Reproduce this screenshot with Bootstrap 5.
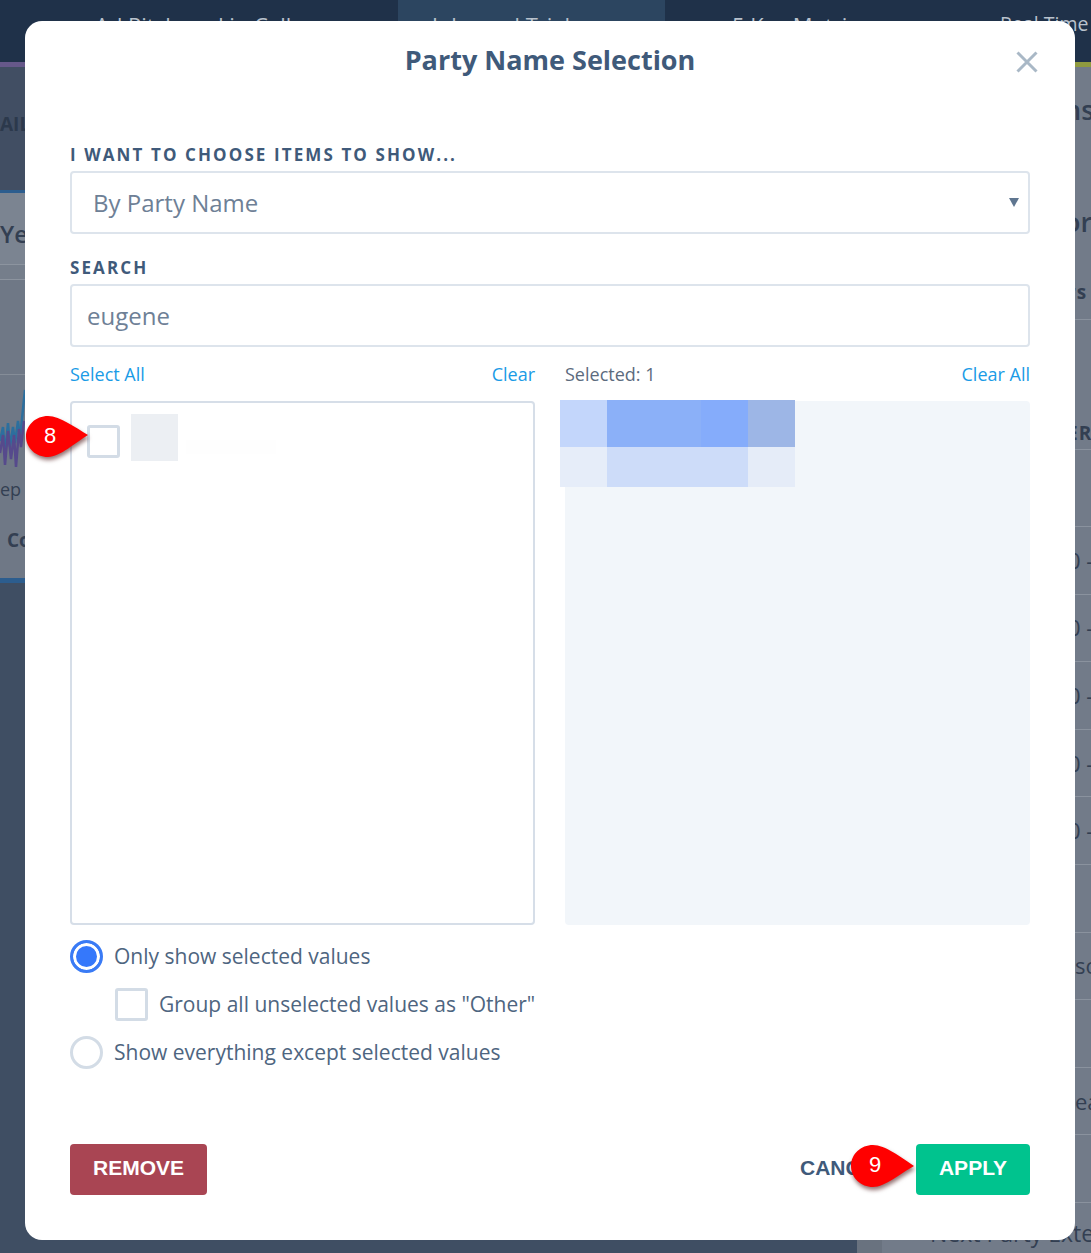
<!DOCTYPE html>
<html lang="en">
<head>
  <meta charset="UTF-8">
  <title>Party Name Selection</title>
  <meta name="viewport" content="width=device-width, initial-scale=1.0">
  <link href="https://cdn.jsdelivr.net/npm/bootstrap@5.3.3/dist/css/bootstrap.min.css" rel="stylesheet">
  <style>
    body { font-family: "Open Sans", sans-serif; background: #3f4e63; overflow: hidden; }
    .page-back { height: 1253px; overflow: hidden; }

    /* page behind the dialog, already dimmed */
    .top-tabs { height: 62px; background: #1f3149; color: #b9c2cd; font-size: 22px; }
    .top-tabs > div { padding-top: 9px; white-space: nowrap; overflow: hidden; }
    .tab-a { width: 398px; padding-left: 95px; }
    .tab-b { width: 267px; padding-left: 34px; background: #2c4560; }
    .tab-c { width: 335px; padding-left: 67px; }
    .tab-d { flex: 1; font-size: 19.5px; }
    .stripe-a { height: 5px; width: 398px; background: #66588a; }
    .stripe-b { height: 5px; flex: 1; background: #8f9a3f; }
    .left-col { width: 857px; }
    .right-col { flex: 1; background: #727b89; color: #333f52; font-size: 22px; white-space: nowrap; overflow: hidden; }
    .left-head { height: 123px; background: #414e63; color: #2c394c; font-size: 19px; font-weight: 700; padding-top: 43px; }
    .left-card { height: 393px; border-top: 3px solid #2c5d8e; border-bottom: 5px solid #2c5d8e; background: #6f7886; color: #333f52; }
    .card-title-back { height: 72px; background: #7b8491; font-size: 24px; font-weight: 600; padding-top: 23px; border-bottom: 1px solid #8c949f; }
    .card-gap { height: 15px; background: #757e8b; border-bottom: 1px solid #8c949f; }
    .card-empty { height: 95px; border-bottom: 1px solid #858d98; }
    .card-plot { height: 95px; }
    .plot-line { display: block; }
    .plot-foot { font-size: 18px; padding-top: 6px; height: 46px; }
    .plot-name { font-size: 19px; font-weight: 700; padding: 10px 0 0 7px; }
    .side-row { display: flex; align-items: center; border-bottom: 1px solid #8a929e; }
    .side-big { display: flex; align-items: center; padding-left: 207px; font-size: 27px; font-weight: 600; }
    .side-small { padding-left: 210px; font-size: 19px; font-weight: 700; letter-spacing: 1px; }
    .s-ns { height: 86px; }
    .s-or { height: 88px; margin-top: 25px; }
    .s-rs { height: 54px; }
    .s-er { height: 130px; align-items: flex-end; padding-bottom: 2px; }
    .s-gap { height: 77px; }
    .s-val { height: 67.600px; padding-left: 211px; }
    .s-txt { height: 67.600px; padding-left: 218px; }
    .s-next { height: 67.600px; padding-left: 48px; border-left: 25px solid #69727f; padding-top: 13px; font-size: 23px; }

    /* dialog */
    .party-dialog { position: absolute; left: 25px; top: 21px; width: 1050px; height: 1219px; background: #fff; border-radius: 17px; padding: 0 45px; color: #3f5a7a; }
    .party-title { font-size: 27px; font-weight: 700; line-height: 38px; padding-top: 20px; margin: 0 0 65px; text-align: center; color: #3f5a7a; }
    .party-close { position: absolute; right: 37px; top: 30px; width: 22px; height: 22px; padding: 0; border: 0; background: none; display: flex; }
    .field-label { display: block; font-size: 17px; font-weight: 700; letter-spacing: 2.1px; line-height: 22px; margin: 0 0 5px; text-transform: uppercase; }
    .party-select.form-select, .party-input.form-control { height: 63px; border: 2px solid #dde4ec; border-radius: 4px; font-size: 24px; color: #6e8096; box-shadow: none; }
    .party-select.form-select { padding: 0 40px 0 21px; margin-bottom: 23px; background-size: 10px 9px; background-position: right 9px center;
      background-image: url("data:image/svg+xml,%3csvg xmlns='http://www.w3.org/2000/svg' viewBox='0 0 10 9'%3e%3cpath fill='%235f7690' d='M0 0h10L5 9z'/%3e%3c/svg%3e"); }
    .party-input.form-control { padding: 0 15px; }
    .list-bar { height: 54px; font-size: 18px; color: #5c6b7e; }
    .list-bar a { color: #1a9be6; text-decoration: none; }
    .list-col { width: 465px; }
    .pick-box { height: 524px; border-radius: 4px; position: relative; }
    .pick-left { border: 2px solid #d6dee8; padding: 11px 15px; }
    .pick-right { background: #f2f6fa; }
    .party-check.form-check-input { width: 33px; height: 33px; margin: 0; flex-shrink: 0; border: 3px solid #d3dce6; border-radius: 3px; background-color: #fff; box-shadow: none; float: none; }
    .party-radio.form-check-input { width: 33px; height: 33px; margin: 0; flex-shrink: 0; border: 3px solid #d3dce6; background-color: #fff; box-shadow: none; float: none; }
    .party-radio.form-check-input:checked { border-color: #3a7bf5; background-color: #3578fb; background-image: none; box-shadow: inset 0 0 0 3px #fff; }
    .hidden-thumb { width: 47px; height: 47px; margin-left: 3px; background: #eceff3; }
    .hidden-name { width: 90px; height: 14px; margin-top: 26px; background: #fefefe; }
    .row-left { margin-top: 11px !important; }
    .blur-grid { position: absolute; left: -5px; top: -1px; display: grid; grid-template-columns: 47px 94px 47px 47px; grid-template-rows: 47px 40px; }
    .b1 { background: #c3d6fb; } .b2 { background: #8bb0f8; } .b3 { background: #85acfb; } .b4 { background: #9db6e6; }
    .b5 { background: #e6edf9; } .b6 { background: #cddcf9; } .b7 { background: #cddcf9; } .b8 { background: #e5ecf8; }
    .choice-list { margin-top: 15px; font-size: 21px; color: #4e6580; line-height: 33px; gap: 15px; }
    .choice-list label { margin-left: 3px; }
    .choice-sub { padding-left: 45px; }
    .party-foot { position: absolute; left: 45px; right: 45px; top: 1123px; }
    .foot-btn { height: 51px; border: 0; border-radius: 4px; font-family: "Liberation Sans", Arial, sans-serif; font-size: 21px; font-weight: 700; color: #fff; padding: 0 0 3px; }
    .btn-remove, .btn-remove:hover { width: 137px; background: #a94553; color: #fff; }
    .btn-cancel, .btn-cancel:hover { width: 116px; background: none; color: #3f5a7a; text-align: left; }
    .btn-apply, .btn-apply:hover { width: 114px; background: #00c38e; color: #fff; }

    /* numbered callouts laid over the dialog */
    .pin { position: absolute; width: 68px; height: 50px; color: #fff; }
    .pin svg { position: absolute; left: 0; top: 0; overflow: visible; }
    .pin span { position: absolute; left: 0; top: 10px; width: 52px; text-align: center; font-family: "Liberation Sans", Arial, sans-serif; font-size: 22px; line-height: 24px; }
    .pin-eight { left: 24px; top: 414px; }
    .pin-nine { left: 849px; top: 1143px; }
  </style>
</head>
<body>
  <div class="page-back">
    <div class="top-tabs d-flex">
      <div class="tab-a">Ad Pitch and in Calls</div>
      <div class="tab-b">Jobs and Trials</div>
      <div class="tab-c">5 Key Metrics</div>
      <div class="tab-d">Real Time</div>
    </div>
    <div class="d-flex">
      <div class="stripe-a"></div>
      <div class="stripe-b"></div>
    </div>
    <div class="d-flex">
      <div class="left-col">
        <div class="left-head">AIL</div>
        <div class="left-card">
          <div class="card-title-back">Ye</div>
          <div class="card-gap"></div>
          <div class="card-empty"></div>
          <div class="card-plot">
            <svg class="plot-line" width="25" height="95" viewBox="0 0 25 95">
              <path d="M0 66 3 52 5 78 8 48 10 72 13 52 15 68 18 46 20 64 22 44 24 24 25 15" fill="none" stroke="#2c6f9e" stroke-width="2.500"/>
              <path d="M0 78 3 60 5 90 8 56 11 84 14 60 16 92 19 54 21 72 24 46" fill="none" stroke="#564a8c" stroke-width="2.500"/>
            </svg>
          </div>
          <div class="plot-foot">ep '</div>
          <div class="plot-name">Co</div>
        </div>
      </div>
      <div class="right-col">
        <div class="side-big s-ns">ns</div>
        <div class="side-big s-or">or</div>
        <div class="side-small side-row s-rs">rs</div>
        <div class="side-small side-row s-er">ER</div>
        <div class="side-row s-gap"></div>
        <div class="side-row s-val">0 -</div>
        <div class="side-row s-val">0 -</div>
        <div class="side-row s-val">0 -</div>
        <div class="side-row s-val">0 -</div>
        <div class="side-row s-val">0 -</div>
        <div class="side-row s-val"></div>
        <div class="side-row s-txt">so</div>
        <div class="side-row s-val"></div>
        <div class="side-row s-txt">ea</div>
        <div class="side-row s-val"></div>
        <div class="s-next">Next Party Extension</div>
      </div>
    </div>
  </div>

  <div class="party-dialog">
    <h1 class="party-title">Party Name Selection</h1>
    <button class="party-close" type="button" aria-label="Close">
      <svg width="22" height="22" viewBox="0 0 22 22"><path d="M1.5 1.5l19 19M20.5 1.5l-19 19" stroke="#a9b8c6" stroke-width="3" fill="none"/></svg>
    </button>

    <label class="field-label" for="chooseBy">I want to choose items to show...</label>
    <select class="form-select party-select" id="chooseBy">
      <option>By Party Name</option>
    </select>

    <label class="field-label" for="partySearch">Search</label>
    <input class="form-control party-input" id="partySearch" type="text" value="eugene">

    <div class="d-flex justify-content-between">
      <div class="list-col">
        <div class="list-bar d-flex justify-content-between align-items-center"><a href="#">Select All</a><a href="#">Clear</a></div>
        <div class="pick-box pick-left d-flex gap-2">
          <input class="form-check-input party-check row-left" type="checkbox" aria-label="Hidden party">
          <div class="hidden-thumb"></div>
          <div class="hidden-name"></div>
        </div>
      </div>
      <div class="list-col">
        <div class="list-bar d-flex justify-content-between align-items-center"><span>Selected: 1</span><a href="#">Clear All</a></div>
        <div class="pick-box pick-right">
          <div class="blur-grid">
            <div class="b1"></div><div class="b2"></div><div class="b3"></div><div class="b4"></div>
            <div class="b5"></div><div class="b6"></div><div class="b7"></div><div class="b8"></div>
          </div>
        </div>
      </div>
    </div>

    <div class="choice-list d-flex flex-column">
      <div class="d-flex align-items-center gap-2">
        <input class="form-check-input party-radio" type="radio" name="showMode" id="onlySelected" checked>
        <label for="onlySelected">Only show selected values</label>
      </div>
      <div class="choice-sub d-flex align-items-center gap-2">
        <input class="form-check-input party-check" type="checkbox" id="groupOther">
        <label for="groupOther">Group all unselected values as "Other"</label>
      </div>
      <div class="d-flex align-items-center gap-2">
        <input class="form-check-input party-radio" type="radio" name="showMode" id="allExcept">
        <label for="allExcept">Show everything except selected values</label>
      </div>
    </div>

    <div class="party-foot d-flex justify-content-between">
      <button class="btn foot-btn btn-remove" type="button">REMOVE</button>
      <div class="d-flex">
        <button class="btn foot-btn btn-cancel" type="button">CANCEL</button>
        <button class="btn foot-btn btn-apply" type="button">APPLY</button>
      </div>
    </div>
  </div>

  <div class="pin pin-eight">
    <svg width="68" height="50" viewBox="0 0 68 50"><path d="M24 2C36 2 52 14 64 21 52 28 36 43 24 43 12 43 2 34 2 22.500 2 11 12 2 24 2Z" fill="#f00" style="filter:drop-shadow(1px 3px 2px rgba(60,0,0,.55))"/></svg>
    <span>8</span>
  </div>
  <div class="pin pin-nine">
    <svg width="68" height="50" viewBox="0 0 68 50"><path d="M24 2C36 2 52 14 65 23 52 30 36 44 24 44 12 44 2 35 2 23 2 11 12 2 24 2Z" fill="#f00" style="filter:drop-shadow(1px 3px 2px rgba(60,0,0,.55))"/></svg>
    <span>9</span>
  </div>

  <script src="https://cdn.jsdelivr.net/npm/bootstrap@5.3.3/dist/js/bootstrap.bundle.min.js"></script>
</body>
</html>
